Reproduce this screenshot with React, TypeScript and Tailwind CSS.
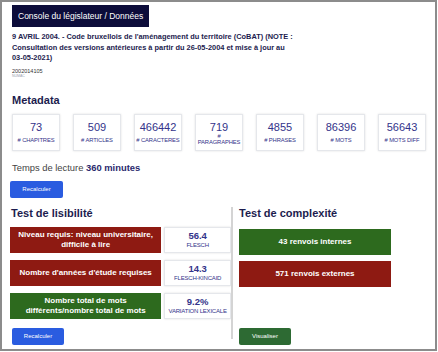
import React from "react";

const stats = [
  { value: "73", label: "# CHAPITRES" },
  { value: "509", label: "# ARTICLES" },
  { value: "466442", label: "# CARACTERES" },
  { value: "719", label: "#\nPARAGRAPHES" },
  { value: "4855", label: "# PHRASES" },
  { value: "86396", label: "# MOTS" },
  { value: "56643", label: "# MOTS DIFF" },
];

const readability = [
  { text: "Niveau requis: niveau universitaire, difficile à lire", value: "56.4", label: "FLESCH", color: "bg-[#8e1a12]" },
  { text: "Nombre d'années d'étude requises", value: "14.3", label: "FLESCH-KINCAID", color: "bg-[#8e1a12]" },
  { text: "Nombre total de mots différents/nombre total de mots", value: "9.2%", label: "VARIATION LEXICALE", color: "bg-[#2d6a1e]" },
];

// One metadata tile
const StatCard: React.FC<{ value: string; label: string }> = ({ value, label }) => (
  <div className="w-[48px] h-[37px] border border-gray-200 shadow-[0_0_2px_rgba(0,0,0,0.12)] flex flex-col items-center justify-between pt-[6px] pb-[7px] text-[#33338a]">
    <div className="text-[11px] leading-[12px]">{value}</div>
    <div className="text-[5.8px] leading-[6px] text-center whitespace-pre tracking-[-0.1px]">{label}</div>
  </div>
);

function App() {
  return (
    <div className="w-[438px] h-[352px] bg-white font-['Liberation_Sans',Arial,sans-serif]">
      <div className="w-[437px] h-[351px] border-2 border-[#8c8c8c] pl-[10px] pr-[8px] pt-[3px] flex flex-col">
        {/* Header */}
        <div className="self-start bg-[#0c0c3a] text-white text-[8.5px] px-[6px] h-[22px] flex items-center">
          Console du législateur / Données
        </div>

        <h1 className="mt-[5px] text-[7.4px] leading-[10.5px] font-bold text-[#1c1c4e]">
          9 AVRIL 2004. - Code bruxellois de l'aménagement du territoire (CoBAT) (NOTE :<br />
          Consultation des versions antérieures à partir du 26-05-2004 et mise à jour au<br />
          03-05-2021)
        </h1>
        <div className="mt-[4px] text-[5.5px] leading-[6px] text-[#333]">2002014105</div>
        <div className="text-[3.5px] leading-[4px] text-gray-400">NUMAC</div>

        {/* Metadata */}
        <h2 className="mt-[16px] text-[11px] leading-[13px] font-bold text-[#1c1c4e]">Metadata</h2>
        <div className="mt-[7px] flex gap-[13px]">
          {stats.map((s) => (
            <StatCard key={s.value} value={s.value} label={s.label} />
          ))}
        </div>
        <div className="mt-[11px] text-[9.4px] leading-[12px] text-[#444]">
          Temps de lecture <span className="font-bold text-[#2a2a6e]">360 minutes</span>
        </div>
        <button className="mt-[7px] -ml-[2px] self-start w-[53px] h-[17px] rounded-[2px] bg-[#2a5ce0] text-white text-[6px]">
          Recalculer
        </button>

        {/* Tests */}
        <div className="mt-[7px] flex -ml-[2px]">
          <div className="w-[221px] flex flex-col">
            <h2 className="text-[11px] leading-[13px] font-bold text-[#1c1c4e] ml-[1px] mt-[2px]">Test de lisibilité</h2>
            <div className="mt-[7px] flex flex-col gap-[7px]">
              {readability.map((r) => (
                <div key={r.label} className="flex gap-[3px]">
                  <div className={`${r.color} w-[152px] h-[26px] flex items-center justify-center text-center text-white text-[8px] leading-[9.5px] font-bold px-[4px]`}>
                    {r.text}
                  </div>
                  <div className="w-[67px] h-[26px] border border-gray-200 shadow-[0_0_2px_rgba(0,0,0,0.12)] flex flex-col items-center justify-center text-[#33338a]">
                    <div className="text-[9.5px] leading-[9.5px] font-bold">{r.value}</div>
                    <div className="text-[6px] leading-[6px] mt-[1px] whitespace-nowrap tracking-[-0.2px]">{r.label}</div>
                  </div>
                </div>
              ))}
            </div>
            <button className="mt-[9px] ml-[2px] self-start w-[52px] h-[17px] rounded-[2px] bg-[#2a5ce0] text-white text-[6px]">
              Recalculer
            </button>
          </div>
          <div className="w-[2px] bg-[#d4d4d4] mt-[2px] h-[132px]" />
          <div className="flex-1 flex flex-col pl-[6px]">
            <h2 className="text-[11px] leading-[13px] font-bold text-[#1c1c4e] mt-[2px]">Test de complexité</h2>
            <div className="mt-[9px] flex flex-col gap-[6px]">
              <div className="w-[152px] h-[26px] bg-[#2d6a1e] flex items-center justify-center text-white text-[8px] font-bold">
                43 renvois internes
              </div>
              <div className="w-[152px] h-[26px] bg-[#8e1a12] flex items-center justify-center text-white text-[8px] font-bold">
                571 renvois externes
              </div>
            </div>
            <button className="mt-auto self-start w-[52px] h-[17px] rounded-[2px] bg-[#2d6a33] text-white text-[6px]">
              Visualiser
            </button>
          </div>
        </div>
      </div>
    </div>
  );
}

export default App;
